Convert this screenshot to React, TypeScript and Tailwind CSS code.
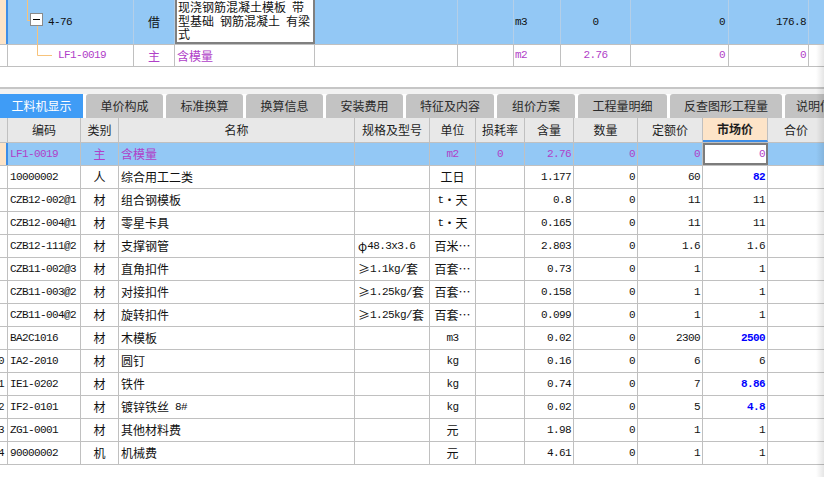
import clsx from "clsx";

const MONO = "font-['Liberation_Mono',monospace] text-[11px] tracking-[-0.6px]";
const CJK = "font-['Noto_Sans_CJK_SC',sans-serif] text-[12px]";
const LINE = "border-[#c0c0c0]";

// splits ascii runs (mono) from chinese runs
function Txt({ s }: { s: string }) {
  const parts = s.split(/([\x20-\x7e]+)/).filter(Boolean);
  return (
    <>
      {parts.map((p, i) =>
        /^[\x20-\x7e]+$/.test(p) ? (
          <span key={i} className={clsx(MONO, "whitespace-pre")}>
            {p}
          </span>
        ) : (
          <span key={i} className={CJK}>
            {p}
          </span>
        )
      )}
    </>
  );
}

const cols = [
  { w: "w-[8px]", a: "justify-start" },
  { w: "w-[73px]", a: "justify-start pl-[2px]" },
  { w: "w-[38px]", a: "justify-center" },
  { w: "w-[236px]", a: "justify-start pl-[2px]" },
  { w: "w-[75px]", a: "justify-start pl-[3px]" },
  { w: "w-[46px]", a: "justify-center" },
  { w: "w-[49px]", a: "justify-center" },
  { w: "w-[49px]", a: "justify-end pr-[2px]" },
  { w: "w-[64px]", a: "justify-end pr-[2px]" },
  { w: "w-[65px]", a: "justify-end pr-[2px]" },
  { w: "w-[65px]", a: "justify-end pr-[2px]" },
  { w: "flex-1", a: "justify-end" },
];

const headers = ["", "编码", "类别", "名称", "规格及型号", "单位", "损耗率", "含量", "数量", "定额价", "市场价", "合价"];

type Row = {
  code: string;
  kind: string;
  name: string;
  spec: string;
  unit: string;
  qty: string;
  price: string;
  market: string;
  blue?: boolean;
};

const rows: Row[] = [
  { code: "10000002", kind: "人", name: "综合用工二类", spec: "", unit: "工日", qty: "1.177", price: "60", market: "82", blue: true },
  { code: "CZB12-002@1", kind: "材", name: "组合钢模板", spec: "", unit: "t・天", qty: "0.8", price: "11", market: "11" },
  { code: "CZB12-004@1", kind: "材", name: "零星卡具", spec: "", unit: "t・天", qty: "0.165", price: "11", market: "11" },
  { code: "CZB12-111@2", kind: "材", name: "支撑钢管", spec: "φ48.3x3.6", unit: "百米⋯", qty: "2.803", price: "1.6", market: "1.6" },
  { code: "CZB11-002@3", kind: "材", name: "直角扣件", spec: "≥1.1kg/套", unit: "百套⋯", qty: "0.73", price: "1", market: "1" },
  { code: "CZB11-003@2", kind: "材", name: "对接扣件", spec: "≥1.25kg/套", unit: "百套⋯", qty: "0.158", price: "1", market: "1" },
  { code: "CZB11-004@2", kind: "材", name: "旋转扣件", spec: "≥1.25kg/套", unit: "百套⋯", qty: "0.099", price: "1", market: "1" },
  { code: "BA2C1016", kind: "材", name: "木模板", spec: "", unit: "m3", qty: "0.02", price: "2300", market: "2500", blue: true },
  { code: "IA2-2010", kind: "材", name: "圆钉", spec: "", unit: "kg", qty: "0.16", price: "6", market: "6" },
  { code: "IE1-0202", kind: "材", name: "铁件", spec: "", unit: "kg", qty: "0.74", price: "7", market: "8.86", blue: true },
  { code: "IF2-0101", kind: "材", name: "镀锌铁丝 8#", spec: "", unit: "kg", qty: "0.02", price: "5", market: "4.8", blue: true },
  { code: "ZG1-0001", kind: "材", name: "其他材料费", spec: "", unit: "元", qty: "1.98", price: "1", market: "1" },
  { code: "90000002", kind: "机", name: "机械费", spec: "", unit: "元", qty: "4.61", price: "1", market: "1" },
];

const tabs = [
  { t: "工料机显示", w: "w-[83px]" },
  { t: "单价构成", w: "w-[77px]" },
  { t: "标准换算", w: "w-[77px]" },
  { t: "换算信息", w: "w-[77px]" },
  { t: "安装费用", w: "w-[77px]" },
  { t: "特征及内容", w: "w-[88px]" },
  { t: "组价方案", w: "w-[78px]" },
  { t: "工程量明细", w: "w-[89px]" },
  { t: "反查图形工程量", w: "w-[112px]" },
  { t: "说明信息", w: "w-[70px]" },
];

function Cell({ i, children, className }: { i: number; children?: React.ReactNode; className?: string }) {
  return (
    <div
      className={clsx(
        "h-full shrink-0 flex items-center overflow-hidden whitespace-nowrap leading-none border-r",
        LINE,
        cols[i].w,
        cols[i].a,
        className
      )}
    >
      {children}
    </div>
  );
}

function TreeLines() {
  return (
    <svg className="absolute left-0 top-0 pointer-events-none" width="60" height="67">
      <g stroke="#f7c37b" strokeWidth="1" fill="none">
        <path d="M27.5 0 V20.5 H30" />
        <path d="M37.5 26 V55.5 H52" />
      </g>
      <rect x="30.5" y="13.5" width="12" height="12" fill="#fff" stroke="#8a8a8a" />
      <path d="M33 19.5 H40" stroke="#000" strokeWidth="1" />
    </svg>
  );
}

export default function App() {
  const purple = "text-[#b040c8]";
  return (
    <div className="relative w-[824px] h-[477px] overflow-hidden bg-white text-[#111]">
      {/* upper grid */}
      <div className="relative">
        <div className={clsx("flex h-[45px] bg-[#93c8f5] border-b", LINE)}>
          <div className="w-[8px] shrink-0 h-full bg-[#fde4c8] border-r-2 border-[#3d8ee8]" />
          <div className="w-[126px] shrink-0 h-full flex items-center pl-[40px] border-r border-[#b4cfe8]">
            <Txt s="4-76" />
          </div>
          <div className="w-[41px] shrink-0 h-full flex items-center justify-center border-r border-[#b4cfe8]">
            <span className={CJK}>借</span>
          </div>
          <div className="w-[140px] shrink-0 h-full bg-white border-x-2 border-b-2 border-[#808080] pl-[1px]">
            <div className={clsx(CJK, "leading-[13.5px] whitespace-pre")}>
              <div>现浇钢筋混凝土模板{"\u2002"}带</div>
              <div>型基础{"\u2002"}钢筋混凝土{"\u2002"}有梁</div>
              <div>式</div>
            </div>
          </div>
          <div className="w-[143px] shrink-0 h-full border-r border-[#b4cfe8]" />
          <div className="w-[56px] shrink-0 h-full border-r border-[#b4cfe8]" />
          <div className="w-[47px] shrink-0 h-full flex items-center pl-[1px] border-r border-[#b4cfe8]">
            <Txt s="m3" />
          </div>
          <div className="w-[70px] shrink-0 h-full flex items-center justify-center border-r border-[#b4cfe8]">
            <Txt s="0" />
          </div>
          <div className="w-[98px] shrink-0 h-full flex items-center justify-end pr-[3px] border-r border-[#b4cfe8]">
            <Txt s="0" />
          </div>
          <div className="w-[80px] shrink-0 h-full flex items-center justify-end pr-[2px] border-r border-[#b4cfe8]">
            <Txt s="176.8" />
          </div>
          <div className="flex-1" />
        </div>
        <div className={clsx("flex h-[22px] border-b", LINE, purple)}>
          <div className={clsx("w-[8px] shrink-0 h-full border-r", LINE)} />
          <div className={clsx("w-[126px] shrink-0 h-full flex items-center pl-[50px] border-r", LINE)}>
            <Txt s="LF1-0019" />
          </div>
          <div className={clsx("w-[41px] shrink-0 h-full flex items-center justify-center border-r", LINE)}>
            <span className={CJK}>主</span>
          </div>
          <div className={clsx("w-[140px] shrink-0 h-full flex items-center pl-[2px] border-r", LINE)}>
            <span className={CJK}>含模量</span>
          </div>
          <div className={clsx("w-[143px] shrink-0 h-full border-r", LINE)} />
          <div className={clsx("w-[56px] shrink-0 h-full border-r", LINE)} />
          <div className={clsx("w-[47px] shrink-0 h-full flex items-center pl-[1px] border-r", LINE)}>
            <Txt s="m2" />
          </div>
          <div className={clsx("w-[70px] shrink-0 h-full flex items-center justify-center border-r", LINE)}>
            <Txt s="2.76" />
          </div>
          <div className={clsx("w-[98px] shrink-0 h-full flex items-center justify-end pr-[3px] border-r", LINE)}>
            <Txt s="0" />
          </div>
          <div className={clsx("w-[80px] shrink-0 h-full flex items-center justify-end pr-[2px] border-r", LINE)}>
            <Txt s="0" />
          </div>
          <div className="flex-1" />
        </div>
        <TreeLines />
      </div>

      <div className="h-[20px] bg-white" />
      <div className="h-[2px] bg-[#c6c6c6]" />
      <div className="h-[5px] bg-[#f2f2f2]" />

      {/* tabs */}
      <div className="flex h-[24px] gap-[3px] bg-white overflow-hidden">
        {tabs.map((t, i) => (
          <div
            key={t.t}
            className={clsx(
              "shrink-0 h-full flex items-center justify-center font-['Noto_Sans_CJK_SC',sans-serif] text-[12px] leading-none",
              t.w,
              i === 0 ? "bg-[#3f9cf6] text-white" : "bg-[#c3c3c3] text-[#2a2a2a] rounded-t-[3px]"
            )}
          >
            {t.t}
          </div>
        ))}
      </div>

      {/* header */}
      <div className={clsx("flex h-[25px] bg-[#e8e8e8] border-b", LINE)}>
        {headers.map((h, i) => (
          <div
            key={i}
            className={clsx(
              "h-full shrink-0 flex items-center justify-center border-r leading-none font-['Noto_Sans_CJK_SC',sans-serif] text-[12px] text-[#1e1e1e]",
              LINE,
              cols[i].w,
              i === 10 && "bg-[#fde4c8] font-bold border-b-2 border-b-[#3d8ee8]",
              i === 11 && "border-r-0"
            )}
          >
            {h}
          </div>
        ))}
      </div>

      {/* selected row */}
      <div className={clsx("flex h-[23px] bg-[#93c8f5] border-b", LINE, purple)}>
        <div className="w-[8px] shrink-0 h-full bg-[#fde4c8] border-r-2 border-[#3d8ee8]" />
        <Cell i={1}>
          <Txt s="LF1-0019" />
        </Cell>
        <Cell i={2}>
          <span className={CJK}>主</span>
        </Cell>
        <Cell i={3}>
          <span className={CJK}>含模量</span>
        </Cell>
        <Cell i={4} />
        <Cell i={5}>
          <Txt s="m2" />
        </Cell>
        <Cell i={6}>
          <Txt s="0" />
        </Cell>
        <Cell i={7}>
          <Txt s="2.76" />
        </Cell>
        <Cell i={8}>
          <Txt s="0" />
        </Cell>
        <Cell i={9}>
          <Txt s="0" />
        </Cell>
        <div className="w-[65px] shrink-0 h-full bg-white border-2 border-[#7c7c7c] flex items-center justify-end pr-[1px] leading-none">
          <Txt s="0" />
        </div>
        <div className="flex-1" />
      </div>

      {rows.map((r, idx) => (
        <div key={r.code} className={clsx("flex h-[23px] border-b", LINE)}>
          <Cell i={0}>
            {idx >= 8 && <span className={clsx(MONO, "-ml-[2px]")}>{String(idx + 2).slice(-1)}</span>}
          </Cell>
          <Cell i={1}>
            <Txt s={r.code} />
          </Cell>
          <Cell i={2}>
            <Txt s={r.kind} />
          </Cell>
          <Cell i={3}>
            <Txt s={r.name} />
          </Cell>
          <Cell i={4}>
            <Txt s={r.spec} />
          </Cell>
          <Cell i={5}>
            <Txt s={r.unit} />
          </Cell>
          <Cell i={6} />
          <Cell i={7}>
            <Txt s={r.qty} />
          </Cell>
          <Cell i={8}>
            <Txt s="0" />
          </Cell>
          <Cell i={9}>
            <Txt s={r.price} />
          </Cell>
          <Cell i={10}>
            {r.blue ? (
              <span className={clsx(MONO, "font-bold text-[#0000ff]")}>{r.market}</span>
            ) : (
              <Txt s={r.market} />
            )}
          </Cell>
          <div className="flex-1" />
        </div>
      ))}

      {/* window edge shadow */}
      <div className="absolute right-0 top-[45px] bottom-0 w-[8px] bg-gradient-to-r from-transparent to-black/10 pointer-events-none" />
    </div>
  );
}
